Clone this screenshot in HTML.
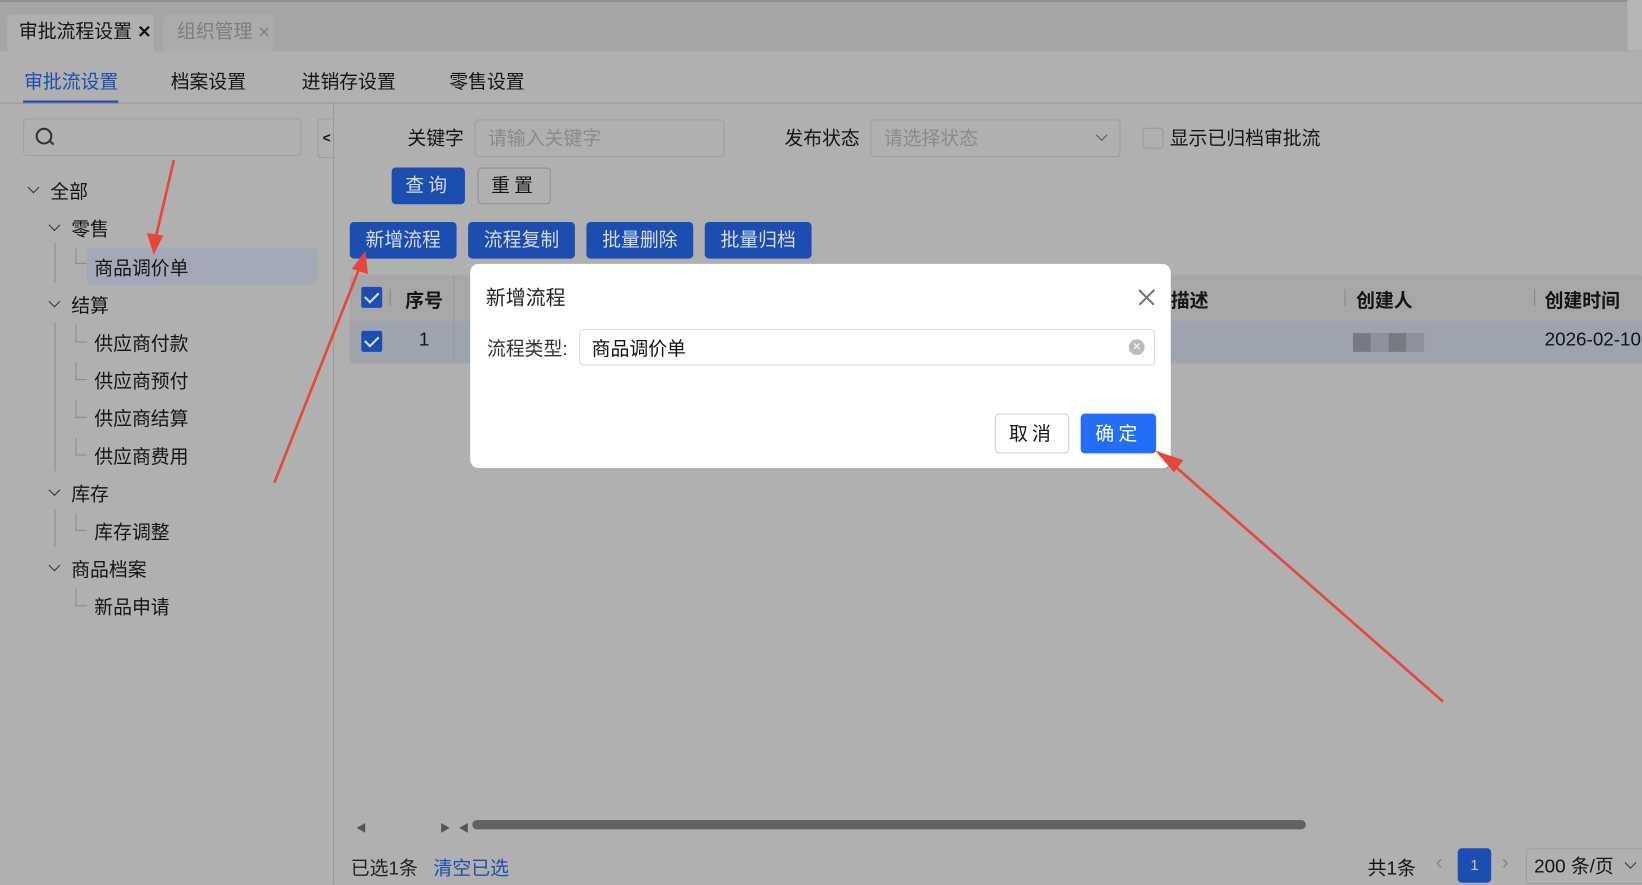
<!DOCTYPE html>
<html><head><meta charset="utf-8"><style>
html,body{margin:0;padding:0;width:1642px;height:885px;overflow:hidden;background:#b0b0b0;}
#w{position:absolute;left:0;top:0;width:1568px;height:845px;transform:scale(1.04719);transform-origin:0 0;background:#b0b0b0;font-family:"Liberation Sans","Noto Sans CJK SC",sans-serif;color:#141414;}
.a{position:absolute;white-space:nowrap;}
.btn{position:absolute;background:#1b4eb0;color:#d8dde8;border-radius:4px;font-size:18px;text-align:center;height:35px;line-height:35px;}
.inp{position:absolute;border:1px solid #9d9d9d;border-radius:4px;background:#b0b0b0;box-sizing:border-box;}
.t{font-size:18px;margin-top:-2px;}
.tl{position:absolute;border-left:1px solid #8a8a8a;}
.tb{position:absolute;border-bottom:1px solid #8a8a8a;border-left:1px solid #8a8a8a;width:10px;height:10px;}
.chev{position:absolute;width:7px;height:7px;border-right:1.5px solid #333;border-bottom:1.5px solid #333;transform:rotate(45deg);}
.cb{position:absolute;width:20px;height:20px;background:#1b4eb0;border-radius:2px;}
.cb:after{content:"";position:absolute;left:6px;top:2px;width:6px;height:11px;border-right:2px solid #d8dde8;border-bottom:2px solid #d8dde8;transform:rotate(45deg);}
</style></head><body><div id="w">
<div class="a" style="left:0;top:0;width:1568px;height:2px;background:#8e8e8e"></div>
<div class="a" style="left:0;top:2px;width:1568px;height:47px;background:#a5a5a5"></div>
<div class="a" style="left:7px;top:14px;width:140px;height:35px;background:#b0b0b0;border-radius:4px 4px 0 0"></div>
<div class="a t" style="left:18px;top:18px;font-size:18px">审批流程设置 <b style="font-size:16px">✕</b></div>
<div class="a" style="left:156px;top:14px;width:105px;height:35px;background:#ababab;border-radius:4px 4px 0 0"></div>
<div class="a t" style="left:169px;top:18px;font-size:18px;color:#7d7d7d">组织管理 <span style="font-size:15px">✕</span></div>
<div class="a" style="left:1554px;top:0;width:14px;height:48px;background:#b6b6b6"></div>

<div class="a t" style="left:23px;top:66px;color:#1b4eb0">审批流设置</div>
<div class="a" style="left:22px;top:96px;width:91px;height:3px;background:#1b4eb0"></div>
<div class="a t" style="left:163px;top:66px">档案设置</div>
<div class="a t" style="left:288px;top:66px">进销存设置</div>
<div class="a t" style="left:429px;top:66px">零售设置</div>
<div class="a" style="left:0;top:98px;width:1568px;height:1px;background:#999"></div>
<div class="a" style="left:318px;top:99px;width:1px;height:746px;background:#9a9a9a"></div>

<div class="inp" style="left:22px;top:113px;width:266px;height:36px"></div>
<div class="a" style="left:34px;top:122px;width:12px;height:12px;border:2px solid #333;border-radius:50%"></div>
<div class="a" style="left:46px;top:135px;width:6px;height:2px;background:#333;transform:rotate(45deg)"></div>
<div class="a" style="left:303px;top:113px;width:16px;height:36px;border:1px solid #9a9a9a;border-right:none;border-radius:4px 0 0 4px;font-size:13px;font-weight:bold;line-height:36px;text-align:center">&lt;</div>

<div class="chev" style="left:28px;top:175px"></div><div class="a t" style="left:48px;top:171px">全部</div>
<div class="chev" style="left:48px;top:211px"></div><div class="a t" style="left:68px;top:207px">零售</div>
<div class="tl" style="left:52px;top:232px;height:38px"></div>
<div class="a" style="left:83px;top:237px;width:220px;height:35px;background:#a3a8b6;border-radius:4px"></div>
<div class="tb" style="left:72px;top:237px;height:14px"></div>
<div class="a t" style="left:90px;top:244px">商品调价单</div>
<div class="chev" style="left:48px;top:284px"></div><div class="a t" style="left:68px;top:280px">结算</div>
<div class="tl" style="left:52px;top:308px;height:142px"></div>
<div class="tb" style="left:72px;top:310px;height:16px"></div><div class="a t" style="left:90px;top:316px">供应商付款</div>
<div class="tb" style="left:72px;top:346px;height:16px"></div><div class="a t" style="left:90px;top:352px">供应商预付</div>
<div class="tb" style="left:72px;top:382px;height:16px"></div><div class="a t" style="left:90px;top:388px">供应商结算</div>
<div class="tb" style="left:72px;top:418px;height:16px"></div><div class="a t" style="left:90px;top:424px">供应商费用</div>
<div class="chev" style="left:48px;top:464px"></div><div class="a t" style="left:68px;top:460px">库存</div>
<div class="tl" style="left:52px;top:486px;height:36px"></div>
<div class="tb" style="left:72px;top:490px;height:16px"></div><div class="a t" style="left:90px;top:496px">库存调整</div>
<div class="chev" style="left:48px;top:536px"></div><div class="a t" style="left:68px;top:532px">商品档案</div>
<div class="tb" style="left:72px;top:562px;height:16px"></div><div class="a t" style="left:90px;top:568px">新品申请</div>

<div class="a t" style="left:389px;top:120px">关键字</div>
<div class="inp" style="left:453px;top:114px;width:239px;height:36px;color:#8a8a8a;font-size:18px;line-height:34px;padding-left:12px">请输入关键字</div>
<div class="a t" style="left:749px;top:120px">发布状态</div>
<div class="inp" style="left:831px;top:114px;width:239px;height:36px;color:#8a8a8a;font-size:18px;line-height:34px;padding-left:12px">请选择状态</div>
<div class="chev" style="left:1048px;top:125px;border-color:#555"></div>
<div class="a" style="left:1091px;top:122px;width:18px;height:18px;border:1px solid #999;border-radius:3px"></div>
<div class="a t" style="left:1117px;top:120px">显示已归档审批流</div>
<div class="btn" style="left:374px;top:160px;width:70px;letter-spacing:4px">查询</div>
<div class="btn" style="left:456px;top:160px;width:70px;background:#b0b0b0;border:1px solid #8f8f8f;box-sizing:border-box;color:#141414;line-height:33px;letter-spacing:4px">重置</div>
<div class="btn" style="left:334px;top:212px;width:102px">新增流程</div>
<div class="btn" style="left:447px;top:212px;width:102px">流程复制</div>
<div class="btn" style="left:560px;top:212px;width:102px">批量删除</div>
<div class="btn" style="left:673px;top:212px;width:102px">批量归档</div>

<div class="a" style="left:334px;top:263px;width:1234px;height:44px;background:#a7a7a7"></div>
<div class="a" style="left:334px;top:307px;width:1234px;height:40px;background:#9ea3b0"></div>
<div class="cb" style="left:345px;top:274px"></div>
<div class="a" style="left:372px;top:276px;width:1px;height:16px;background:#888"></div>
<div class="a t" style="left:387px;top:275px;font-weight:bold">序号</div>
<div class="a" style="left:433px;top:263px;width:1px;height:84px;background:#999"></div>
<div class="a t" style="left:1118px;top:275px;font-weight:bold">描述</div>
<div class="a" style="left:1284px;top:276px;width:1px;height:16px;background:#888"></div>
<div class="a t" style="left:1295px;top:275px;font-weight:bold">创建人</div>
<div class="a" style="left:1465px;top:276px;width:1px;height:16px;background:#888"></div>
<div class="a t" style="left:1475px;top:275px;font-weight:bold">创建时间</div>
<div class="cb" style="left:345px;top:316px"></div>
<div class="a t" style="left:400px;top:316px">1</div>
<div class="a" style="left:1292px;top:318px;width:17px;height:18px;background:#777a82"></div>
<div class="a" style="left:1309px;top:318px;width:17px;height:18px;background:#8e929c"></div>
<div class="a" style="left:1326px;top:318px;width:17px;height:18px;background:#777a82"></div>
<div class="a" style="left:1343px;top:318px;width:17px;height:18px;background:#8e929c"></div>
<div class="a t" style="left:1475px;top:316px">2026-02-10</div>

<div class="a" style="left:340px;top:782px;font-size:10px;color:#555">◀</div>
<div class="a" style="left:420px;top:782px;font-size:10px;color:#555">▶</div>
<div class="a" style="left:438px;top:782px;font-size:10px;color:#555">◀</div>
<div class="a" style="left:451px;top:783px;width:796px;height:9px;background:#626262;border-radius:5px"></div>
<div class="a t" style="left:335px;top:817px;color:#222">已选1条</div>
<div class="a t" style="left:414px;top:817px;color:#1b4eb0">清空已选</div>
<div class="a t" style="left:1306px;top:817px">共1条</div>
<div class="a" style="left:1371px;top:813px;color:#888;font-size:20px">‹</div>
<div class="a" style="left:1392px;top:810px;width:32px;height:33px;background:#1b4eb0;border-radius:4px;color:#ccd;font-size:14px;text-align:center;line-height:33px">1</div>
<div class="a" style="left:1434px;top:813px;color:#888;font-size:20px">›</div>
<div class="inp" style="left:1457px;top:810px;width:120px;height:34px;font-size:18px;line-height:32px;padding-left:7px">200 条/页</div>
<div class="chev" style="left:1553px;top:820px"></div>

<!-- modal -->
<div class="a" style="left:449px;top:252px;width:669px;height:195px;background:#fff;border-radius:8px"></div>
<div class="a" style="left:464px;top:270px;font-size:19px;color:#222">新增流程</div>
<div class="a" style="left:1085px;top:283px;width:20px;height:1.5px;background:#777;transform:rotate(45deg)"></div>
<div class="a" style="left:1085px;top:283px;width:20px;height:1.5px;background:#777;transform:rotate(-45deg)"></div>
<div class="a t" style="left:465px;top:321px;color:#333">流程类型:</div>
<div class="a" style="left:553px;top:314px;width:550px;height:35px;border:1px solid #d9d9d9;border-radius:4px;box-sizing:border-box"></div>
<div class="a t" style="left:565px;top:321px;color:#111">商品调价单</div>
<div class="a" style="left:1078px;top:324px;width:15px;height:15px;border-radius:50%;background:#bbb;color:#fff;font-size:10px;text-align:center;line-height:15px">✕</div>
<div class="a" style="left:950px;top:395px;width:71px;height:38px;border:1px solid #d0d0d0;border-radius:4px;box-sizing:border-box;font-size:18px;text-align:center;line-height:36px;letter-spacing:4px">取消</div>
<div class="a" style="left:1032px;top:395px;width:72px;height:38px;background:#236ef4;border-radius:4px;color:#fff;font-size:18px;text-align:center;line-height:38px;letter-spacing:4px">确定</div>

<svg class="a" style="left:0;top:0" width="1568" height="845">
<g stroke="#e8463a" stroke-width="2.5" fill="#e8463a">
<line x1="166" y1="153" x2="148" y2="230"/><polygon points="142,224 154,226 147,240"/>
<line x1="262" y1="461" x2="344" y2="254"/><polygon points="338,256 350,260 348,243"/>
<line x1="1378" y1="670" x2="1116" y2="440"/><polygon points="1121,449 1128,440 1107,433"/>
</g></svg>
</div></body></html>
